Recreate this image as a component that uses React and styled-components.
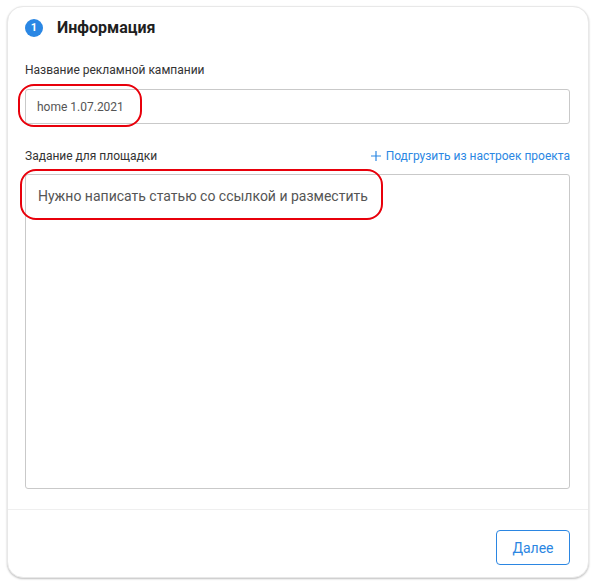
import React from "react";
import styled, { createGlobalStyle } from "styled-components";

const Global = createGlobalStyle`
  html, body { margin: 0; padding: 0; background: #fff; }
  body { font-family: Roboto, "Noto Sans", Arial, sans-serif; }
  * { box-sizing: border-box; }
`;

const Page = styled.div`
  padding: 6px 7px 7px 7px;
`;

const Card = styled.section`
  width: 582px;
  height: 572px;
  border: 1px solid #e8e8e8;
  border-radius: 16px;
  box-shadow: 0 1px 2px rgba(0, 0, 0, 0.25);
  background: #fff;
  display: flex;
  flex-direction: column;
  overflow: hidden;
`;

const Body = styled.div`
  padding: 11px 18px 0 17px;
  display: flex;
  flex-direction: column;
  flex: 1;
`;

const Header = styled.div`
  display: flex;
  align-items: center;
  gap: 14px;
  height: 20px;
`;

const Step = styled.span`
  flex: none;
  width: 18px;
  height: 18px;
  margin-top: -1px;
  border-radius: 50%;
  background: #2a87e4;
  color: #fff;
  font-size: 11px;
  font-weight: 700;
  display: flex;
  align-items: center;
  justify-content: center;
`;

const Title = styled.h2`
  margin: 0;
  font-size: 16px;
  font-weight: 700;
  color: #1f1f1f;
  line-height: 20px;
`;

const LabelRow = styled.div`
  display: flex;
  justify-content: space-between;
  align-items: center;
  margin-top: ${(p) => p.$mt}px;
  height: 16px;
`;

const Label = styled.label`
  font-size: 12px;
  line-height: 16px;
  color: #333;
`;

const Link = styled.a`
  display: flex;
  align-items: center;
  gap: 5px;
  font-size: 12px;
  line-height: 16px;
  color: #2b87e3;
  text-decoration: none;
  cursor: pointer;
`;

const FieldWrap = styled.div`
  position: relative;
  margin-top: ${(p) => p.$mt}px;
`;

const Input = styled.div`
  height: 35px;
  border: 1px solid #c9c9c9;
  border-radius: 3px;
  padding: 0 11px;
  display: flex;
  align-items: center;
  font-size: 12px;
  color: #555;
`;

const TextArea = styled.div`
  height: 315px;
  border: 1px solid #c9c9c9;
  border-radius: 3px;
  padding: 11px 12px;
  font-size: 14px;
  line-height: 20px;
  color: #555;
`;

const Mark = styled.span`
  position: absolute;
  left: ${(p) => p.$l}px;
  top: ${(p) => p.$t}px;
  width: ${(p) => p.$w}px;
  height: ${(p) => p.$h}px;
  border: 2px solid #e8000b;
  border-radius: 16px;
  pointer-events: none;
`;

const Divider = styled.hr`
  margin: 20px 0 0;
  border: none;
  border-top: 1px solid #efefef;
`;

const Footer = styled.div`
  display: flex;
  justify-content: flex-end;
  padding: 20px 18px 12px;
`;

const Button = styled.button`
  width: 74px;
  height: 35px;
  border: 1px solid #2b86e2;
  border-radius: 4px;
  background: #fff;
  color: #2b86e2;
  font-family: Roboto, sans-serif;
  font-size: 14px;
  cursor: pointer;
`;

export default function App() {
  return (
    <>
      <Global />
      <Page>
        <Card>
          <Body>
            <Header>
              <Step>1</Step>
              <Title>Информация</Title>
            </Header>
            <LabelRow $mt={24}>
              <Label>Название рекламной кампании</Label>
            </LabelRow>
            <FieldWrap $mt={11}>
              <Input>home 1.07.2021</Input>
              <Mark $l={-7} $t={-5} $w={124} $h={43} />
            </FieldWrap>
            <LabelRow $mt={24}>
              <Label>Задание для площадки</Label>
              <Link>
                <svg width="10" height="10" viewBox="0 0 10 10">
                  <path d="M5 0v10M0 5h10" stroke="#2b87e3" strokeWidth="1.2" />
                </svg>
                Подгрузить из настроек проекта
              </Link>
            </LabelRow>
            <FieldWrap $mt={10}>
              <TextArea>Нужно написать статью со ссылкой и разместить</TextArea>
              <Mark $l={-5} $t={-5} $w={363} $h={51} />
            </FieldWrap>
          </Body>
          <Divider />
          <Footer>
            <Button>Далее</Button>
          </Footer>
        </Card>
      </Page>
    </>
  );
}
